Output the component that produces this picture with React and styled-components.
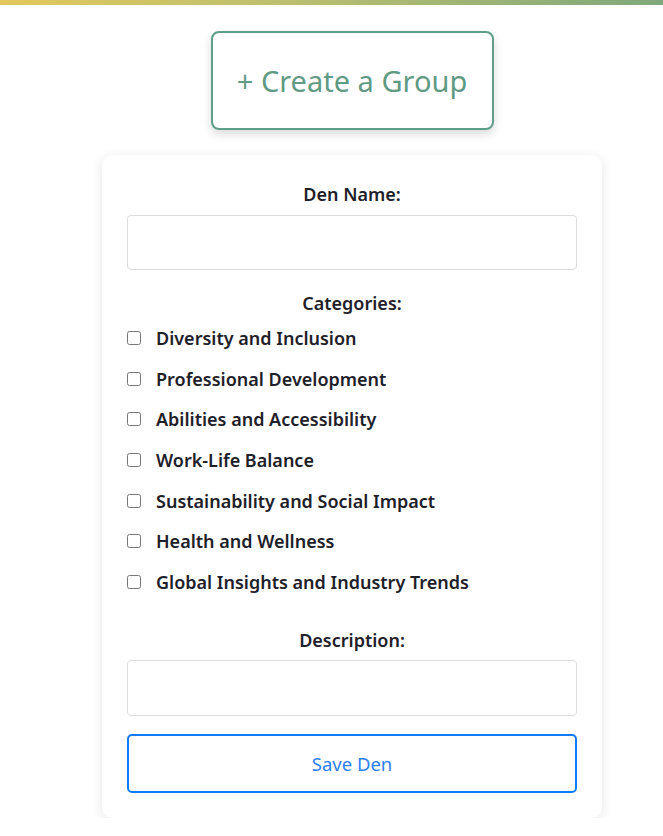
import React from "react";
import styled, { createGlobalStyle } from "styled-components";

const Global = createGlobalStyle`
  html, body { margin: 0; padding: 0; background: #fff; }
  body { font-family: "Noto Sans", "Open Sans", sans-serif; color: #1e2029; }
  * { box-sizing: border-box; }
`;

const TopBar = styled.div`
  height: 5px;
  background: linear-gradient(90deg, #e2c85c 0%, #bfc06e 40%, #7ea87c 100%);
`;

const Page = styled.main`
  display: flex;
  flex-direction: column;
  align-items: center;
  padding-top: 26px;
  padding-left: 41px;
`;

const CreateButton = styled.button`
  width: 283px;
  height: 99px;
  border: 2px solid #5f9e87;
  border-radius: 8px;
  background: #fff;
  color: #5f9a85;
  font-family: "Noto Sans", sans-serif;
  font-size: 29px;
  box-shadow: 0 4px 10px rgba(0, 0, 0, 0.15);
  cursor: pointer;
`;

const Card = styled.form`
  margin-top: 25px;
  width: 500px;
  padding: 27px 25px 25px;
  border-radius: 10px;
  background: #fff;
  box-shadow: 0 2px 12px rgba(0, 0, 0, 0.1);
  display: flex;
  flex-direction: column;
`;

const Label = styled.label`
  display: block;
  text-align: center;
  font-weight: 600;
  font-size: 18px;
  line-height: 24px;
  margin-top: ${(p) => p.$top || 0}px;
  margin-bottom: ${(p) => p.$bottom || 0}px;
`;

const TextInput = styled.input`
  width: 100%;
  height: ${(p) => p.$h}px;
  border: 1px solid #dcdcdc;
  border-radius: 4px;
  padding: 0 12px;
  font-size: 16px;
`;

const CheckList = styled.div`
  display: flex;
  flex-direction: column;
  gap: 16.67px;
  margin-top: 11px;
`;

const CheckRow = styled.label`
  display: flex;
  align-items: center;
  gap: 15px;
  font-weight: 600;
  font-size: 18px;
  line-height: 24px;
`;

const Box = styled.input`
  margin: 0;
  width: 14px;
  height: 14px;
`;

const SaveButton = styled.button`
  margin-top: 18px;
  height: 59px;
  width: 100%;
  border: 2px solid #0d7bfb;
  border-radius: 5px;
  background: #fff;
  color: #2c80f5;
  font-family: "Noto Sans", sans-serif;
  font-size: 18.5px;
  cursor: pointer;
`;

const categories = [
  "Diversity and Inclusion",
  "Professional Development",
  "Abilities and Accessibility",
  "Work-Life Balance",
  "Sustainability and Social Impact",
  "Health and Wellness",
  "Global Insights and Industry Trends",
];

export default function App() {
  return (
    <>
      <Global />
      <TopBar />
      <Page>
        <CreateButton type="button">+ Create a Group</CreateButton>
        <Card onSubmit={(e) => e.preventDefault()}>
          <Label $bottom={9}>Den Name:</Label>
          <TextInput $h={55} />
          <Label $top={21}>Categories:</Label>
          <CheckList>
            {categories.map((c) => (
              <CheckRow key={c}>
                <Box type="checkbox" />
                {c}
              </CheckRow>
            ))}
          </CheckList>
          <Label $top={34} $bottom={8}>Description:</Label>
          <TextInput $h={56} />
          <SaveButton type="submit">Save Den</SaveButton>
        </Card>
      </Page>
    </>
  );
}
